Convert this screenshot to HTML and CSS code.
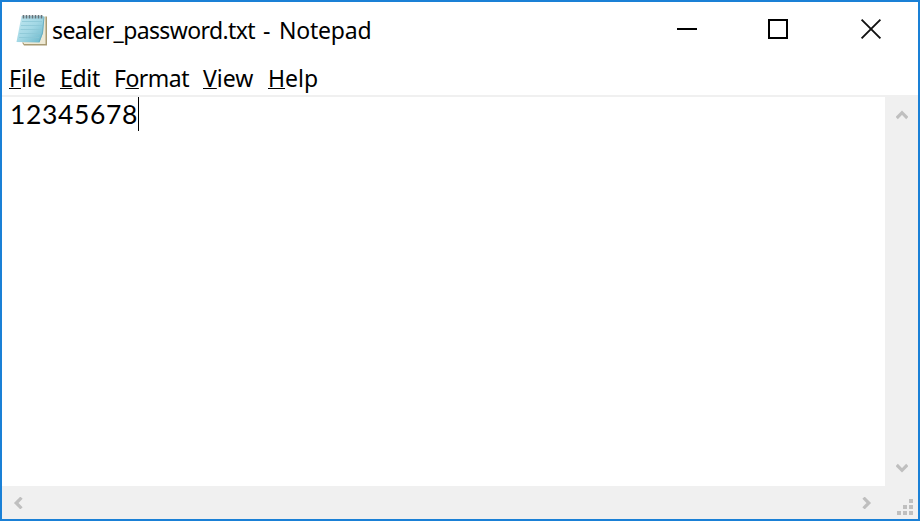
FILE: index.html
```html
<!DOCTYPE html>
<html lang="en">
<head>
<meta charset="utf-8">
<title>sealer_password.txt - Notepad</title>
<link rel="stylesheet" href="styles.css">
</head>
<body>
<div class="window">
  <header class="titlebar">
    <svg class="app-icon" width="32" height="34" viewBox="0 0 32 34">
      <defs>
        <linearGradient id="page" x1="0" y1="0" x2="1" y2="1">
          <stop offset="0" stop-color="#c3e8f1"/><stop offset=".5" stop-color="#a3d8e5"/><stop offset="1" stop-color="#65b4c8"/>
        </linearGradient>
      </defs>
      <path d="M26 3.500h5V32.500H8l-2-3h20z" fill="#a89a72"/>
      <path d="M25 3h4.500v28H8L7 27z" fill="#eee9d5"/>
      <path d="M5.500 3H28l-1 17-3.500 9.500L.500 29z" fill="url(#page)"/>
      <path d="M6 8.500h20M5 12.500h21M4.500 16.500h21M3.500 20.500h21M3 24.500h20" stroke="#8bc6d5" stroke-width=".8"/>
      <path d="m28 4-1.500 16-3.500 9" fill="none" stroke="#69aec2"/>
      <path d="M7.500 5.500V2M10.500 5.500V2M13.500 5.500V2M16.500 5.500V2M19.500 5.500V2M22.500 5.500V2M25.500 5.500V2" stroke="#66747b" stroke-width="1.700"/>
    </svg>
    <h1 class="title"><span class="name">sealer_password.txt</span> <span class="dash">-</span> <span>Notepad</span></h1>
    <div class="controls">
      <svg class="control" width="92" height="56" viewBox="0 0 92 56"><path d="M36 27h20" stroke="#000" stroke-width="2"/></svg>
      <svg class="control" width="92" height="56" viewBox="0 0 92 56"><path d="M36 18h18v18H36z" fill="none" stroke="#000" stroke-width="2"/></svg>
      <svg class="control" width="92" height="56" viewBox="0 0 92 56"><path d="m36.600 17.600 18.800 18.800m0-18.800L36.600 36.400" stroke="#111" stroke-width="1.900"/></svg>
    </div>
  </header>
  <nav class="menu">
    <span class="item file"><u>F</u>ile</span>
    <span class="item edit"><u>E</u>dit</span>
    <span class="item format">F<u>o</u>rmat</span>
    <span class="item view"><u>V</u>iew</span>
    <span class="item help"><u>H</u>elp</span>
  </nav>
  <main class="editor">
    <div class="text"><span class="line">12345678</span><i class="caret"></i></div>
    <div class="scroll-y">
      <svg width="12" height="10" viewBox="0 0 12 10"><path d="m.7 8 5.300-5.300L11.300 8" /></svg>
      <svg width="12" height="10" viewBox="0 0 12 10"><path d="M.7 2 6 7.300 11.300 2" /></svg>
    </div>
    <div class="scroll-x">
      <svg width="10" height="12" viewBox="0 0 10 12"><path d="M8.500.7 3.200 6l5.300 5.300" /></svg>
      <svg width="10" height="12" viewBox="0 0 10 12"><path d="M1.500.7 6.800 6l-5.300 5.300" /></svg>
    </div>
    <div class="corner">
      <svg width="16" height="16" viewBox="0 0 16 16"><path class="grip" d="M12 0h4v4h-4zM6 6h4v4H6zM12 6h4v4h-4zM0 12h4v4H0zM6 12h4v4H6zM12 12h4v4h-4z"/></svg>
    </div>
  </main>
</div>
</body>
</html>
```
FILE: styles.css
```css
* { box-sizing: border-box; }
body { margin: 0; background: #fff; color: #000; font-family: "Noto Sans", sans-serif; }
svg { display: block; flex: none; }
.window { width: 920px; height: 521px; border: 2px solid #1a80d6; display: flex; flex-direction: column; background: #fff; overflow: hidden; }
.titlebar { height: 60px; display: flex; align-items: flex-start; }
.app-icon { margin: 11px 0 0 14px; }
.title { display: flex; margin: 12px 0 0 4px; width: 330px; font-size: 23px; line-height: 32px; font-weight: 400; letter-spacing: -.2px; white-space: nowrap; }
.name { width: 210px; letter-spacing: -.62px; }
.dash { width: 17px; padding-left: 1px; }
.controls { display: flex; margin-left: auto; margin-right: 1px; }
.menu { height: 33px; padding-left: 7px; display: flex; font-size: 23px; line-height: 32px; white-space: nowrap; }
.item u { text-decoration-thickness: 1px; text-underline-offset: 1px; text-decoration-skip-ink: none; }
.file { width: 51px; }
.edit { width: 54px; letter-spacing: -.3px; }
.format { width: 89px; letter-spacing: -.5px; }
.view { width: 65px; }
.editor { flex: 1; border-top: 2px solid #f0f0f0; display: grid; grid-template-columns: 883px 33px; grid-template-rows: 389px 33px; }
.text { display: flex; align-items: flex-start; padding-left: 8px; font: 26.5px/34px Lato, sans-serif; letter-spacing: .63px; }
.line { width: 128px; }
.caret { width: 1px; height: 34px; background: #000; }
.scroll-y, .scroll-x, .corner { background: #f0f0f0; }
.scroll-y { display: flex; flex-direction: column; align-items: center; justify-content: space-between; padding: 13px 0; }
.scroll-x { display: flex; align-items: center; justify-content: space-between; padding: 0 13px 0 11px; }
.scroll-y path, .scroll-x path { fill: none; stroke: #bfbfbf; stroke-width: 3.2; }
.corner { display: flex; align-items: flex-end; justify-content: flex-end; padding: 0 5px 4px 0; }
.grip { fill: #bfbfbf; }
```
